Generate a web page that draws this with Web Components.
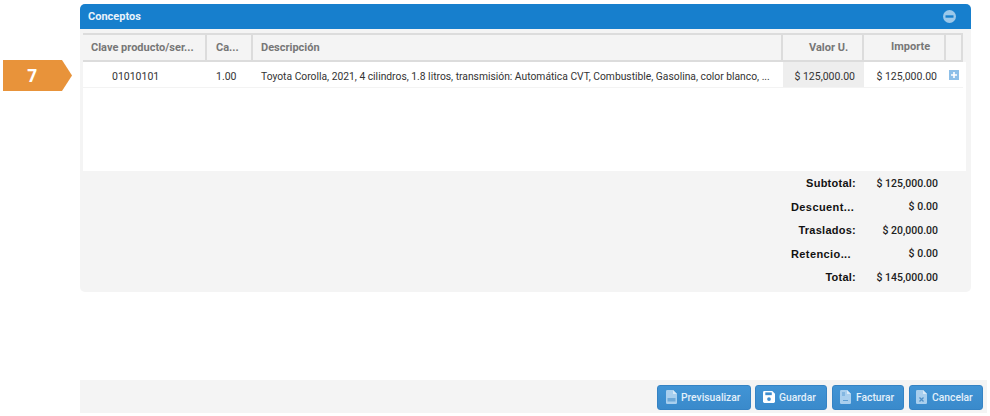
<!DOCTYPE html>
<html><head><meta charset="utf-8">
<style>
html,body{margin:0;padding:0;background:#fff}
body{width:990px;height:416px;overflow:hidden;font-family:Roboto,"Liberation Sans",sans-serif}
</style></head><body>
<invoice-page></invoice-page>
<script>
const def=(n,html)=>{customElements.define(n,class extends HTMLElement{connectedCallback(){if(!this.shadowRoot){this.attachShadow({mode:'open'}).innerHTML=html(this);}}});};
const doc='M0 1.200Q0 0 1.200 0H7l4 4v8.800q0 1.200-1.200 1.200H1.200Q0 14 0 12.800z';
const ICONS={
 pdf:`<svg width="11" height="14" viewBox="0 0 11 14"><path d="${doc}" fill="#a9cfee"/><path d="M7 0v4h4z" fill="#d9eaf8"/><rect x="1.500" y="8" width="8" height="3.500" fill="#6fa9d8"/></svg>`,
 save:'<svg width="12" height="12" viewBox="0 0 13 13"><path d="M1.500 0H10l3 3v8.500Q13 13 11.500 13h-10Q0 13 0 11.500v-10Q0 0 1.500 0z" fill="#fff"/><rect x="2.500" y="1.500" width="7" height="3" fill="#3f8ecf"/><circle cx="6.500" cy="8.800" r="2" fill="#3f8ecf"/></svg>',
 bill:`<svg width="11" height="14" viewBox="0 0 11 14"><path d="${doc}" fill="#a9cfee"/><path d="M7 0v4h4z" fill="#d9eaf8"/><path d="M2 3h3M2 5h3M3 10.500h5" stroke="#5f9fd4" stroke-width="1"/></svg>`,
 cancel:`<svg width="11" height="14" viewBox="0 0 11 14"><path d="${doc}" fill="#a9cfee"/><path d="M7 0v4h4z" fill="#d9eaf8"/><path d="M3.500 7.500l4 4M7.500 7.500l-4 4" stroke="#4f8fc6" stroke-width="1.300"/></svg>`
};
def('step-flag',()=>`<style>:host{display:block;width:69px;height:31px}
.f{width:69px;height:31px;background:#e8933a;clip-path:polygon(0 0,59px 0,69px 15.500px,59px 31px,0 31px);display:flex;align-items:center;justify-content:center;padding-right:11px;box-sizing:border-box;color:#fff;font:700 17px "Open Sans",Roboto,sans-serif}</style><div class="f"><slot></slot></div>`);
def('panel-head',()=>`<style>:host{display:flex;align-items:center;justify-content:space-between;height:25px;background:#177fcd;border-radius:5px 5px 0 0;padding:0 15px 0 8px;color:#e8f2fb;font:700 11px Roboto,sans-serif;box-sizing:border-box}
svg{display:block}</style><span><slot></slot></span><svg width="13" height="13" viewBox="0 0 13 13"><circle cx="6.500" cy="6.500" r="6.500" fill="#9cc8ea"/><rect x="2.500" y="5.300" width="8" height="2.400" fill="#177fcd"/></svg>`);
def('grid-table',()=>`<style>:host{display:block;font:10.500px Roboto,sans-serif;color:#333;width:883px;margin-left:3px}
.r{display:grid;grid-template-columns:124px 46px 530px 81px 82px 17px}
.h{width:880px;height:29px;background:#f4f4f4;border-top:2px solid #dcdcdc;border-bottom:2px solid #dcdcdc;box-sizing:border-box;color:#777;font-weight:700;font-size:11px}
.h>div{display:flex;align-items:center;border-right:2px solid #dcdcdc;box-sizing:border-box;padding:0 0 1px 8px;white-space:nowrap;overflow:hidden}
.b{height:26px;background:#fff;box-sizing:border-box;position:relative}
.b::after{content:"";position:absolute;left:0;width:880px;bottom:0;height:1px;background:#f3f3f3}
.b>div{display:flex;align-items:center;padding:2px 0 0;white-space:nowrap;overflow:hidden;box-sizing:border-box}
.e{height:83px;background:#fff}
.v{background:#eee}
</style>
<div class="r h"><div>Clave producto/ser...</div><div style="padding-left:9px">Ca...</div><div style="padding-left:8px">Descripción</div><div style="padding-left:26px">Valor U.</div><div style="padding:0 0 3px 27px">Importe</div><div></div></div>
<div class="r b"><div style="padding-left:29px">01010101</div><div style="padding-left:9px">1.00</div><div style="padding-left:8px;font-size:10.300px">Toyota Corolla, 2021, 4 cilindros, 1.8 litros, transmisión: Automática CVT, Combustible, Gasolina, color blanco, ...</div><div class="v" style="justify-content:flex-end;padding-right:9px">$ 125,000.00</div><div style="justify-content:flex-end;padding-right:9px">$ 125,000.00</div><div style="padding-left:3px;padding-top:0"><svg width="10" height="10" viewBox="0 0 10 10"><rect width="10" height="10" fill="#8dbfe8"/><path d="M5 2v6M2 5h6" stroke="#fff" stroke-width="1.600"/></svg></div></div>
<div class="e"></div>`);
def('total-row',(h)=>`<style>:host{display:grid;grid-template-columns:1fr 82px;height:23.500px;align-items:center;padding-right:33px}
.l{font:700 11px "Liberation Sans",Arial,sans-serif;color:#111;letter-spacing:${h.hasAttribute('cut')?'.4px':'.25px'};justify-self:end;width:65px;white-space:nowrap;text-align:${h.hasAttribute('cut')?'left':'right'}}
.v{font:500 10.500px Roboto,sans-serif;text-align:right;color:#222}</style><div class="l">${h.getAttribute('label')}</div><div class="v">${h.getAttribute('value')}</div>`);
def('tool-button',(h)=>`<style>:host{display:inline-flex;align-items:center;width:${h.getAttribute('w')}px;height:25px;box-sizing:border-box;background:linear-gradient(#4194d5,#3a8acb);border:1px solid #3583c4;border-radius:3px;color:#e3f0fa;font:500 10.300px Roboto,sans-serif;padding:0 0 0 ${h.getAttribute('pl')||8}px;gap:${h.getAttribute('gap')||5}px}
svg{display:block}</style>${ICONS[h.getAttribute('icon')]}<slot></slot>`);
def('invoice-page',()=>`<style>:host{display:block;width:990px;height:416px;box-sizing:border-box;padding-top:4px;position:relative}
.main{margin:0 19px 0 80px;height:288px;background:#f4f4f4;border-radius:5px;display:flex;flex-direction:column}
.gap{height:4px;flex:none}
.tot{padding-top:.500px}
step-flag{position:absolute;left:3px;top:60px}
.bar{position:absolute;left:80px;right:3px;top:380px;height:33px;background:#f4f4f4;display:flex;justify-content:flex-end;align-items:center;padding:1px 4px 0 0;box-sizing:border-box}
tool-button{margin-left:5px}
tool-button:first-child,tool-button[icon=save]{margin-left:4px}
</style>
<step-flag>7</step-flag>
<div class="main"><panel-head>Conceptos</panel-head><div class="gap"></div><grid-table></grid-table>
<div class="tot"><total-row label="Subtotal:" value="$ 125,000.00"></total-row><total-row cut label="Descuent..." value="$ 0.00"></total-row><total-row label="Traslados:" value="$ 20,000.00"></total-row><total-row cut label="Retencio..." value="$ 0.00"></total-row><total-row label="Total:" value="$ 145,000.00"></total-row></div></div>
<div class="bar"><tool-button icon="pdf" w="94" pl="8" gap="4">Previsualizar</tool-button><tool-button icon="save" w="72" pl="7" gap="4">Guardar</tool-button><tool-button icon="bill" w="72" pl="7">Facturar</tool-button><tool-button icon="cancel" w="74" pl="6">Cancelar</tool-button></div>`);
</script></body></html>
